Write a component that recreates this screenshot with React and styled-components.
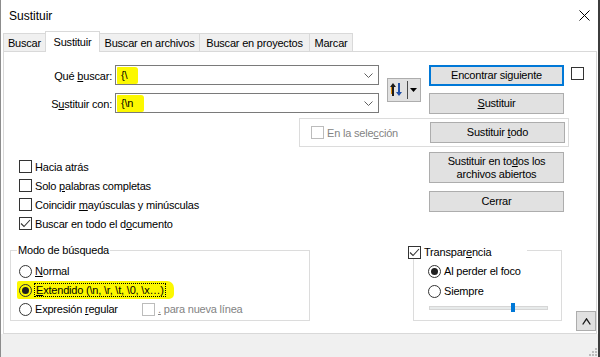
import React from "react";
import styled, { createGlobalStyle } from "styled-components";

const GlobalStyle = createGlobalStyle`
  html, body { margin: 0; padding: 0; background: #ffffff; }
  body {
    font-family: "Liberation Sans", Arial, sans-serif;
    font-size: 11px;
    letter-spacing: -0.2px;
    color: #000;
  }
  *, *::before, *::after { box-sizing: border-box; }
`;

const Window = styled.div`
  width: 600px;
  height: 357px;
  display: flex;
  flex-direction: column;
  border-left: 1px solid #8c8c8c;
  border-right: 2px solid #3c3c3c;
  background: #ffffff;
  overflow: hidden;
`;

const TitleBar = styled.div`
  flex: none;
  height: 31px;
  display: flex;
  align-items: center;
  justify-content: space-between;
  padding: 0 8px;
  font-size: 12px;
  letter-spacing: 0;
`;

const TabRow = styled.div`
  flex: none;
  height: 20px;
  display: flex;
  align-items: flex-end;
  margin-left: 2px;
  position: relative;
  z-index: 1;
`;

const Tab = styled.div`
  width: ${(p) => p.$w}px;
  height: ${(p) => (p.$active ? 21 : 18)}px;
  margin-left: ${(p) => (p.$first ? 0 : -1)}px;
  margin-bottom: ${(p) => (p.$active ? -1 : 0)}px;
  border: 1px solid #d9d9d9;
  border-bottom: none;
  background: ${(p) => (p.$active ? "#ffffff" : "#f0f0f0")};
  display: flex;
  align-items: center;
  justify-content: center;
  white-space: nowrap;
  position: relative;
  z-index: ${(p) => (p.$active ? 2 : 1)};
`;

const Panel = styled.div`
  flex: none;
  width: 594px;
  height: 283px;
  margin-left: 2px;
  border: 1px solid #d9d9d9;
  display: flex;
  flex-direction: column;
  background: #ffffff;
`;

const Footer = styled.div`
  flex: 1;
  background: #f0f0f0;
  display: flex;
  justify-content: flex-end;
  align-items: flex-end;
`;

const TopGrid = styled.div`
  margin-top: 13px;
  display: grid;
  grid-template-columns: 111px 264px 42px 143px 20px;
  grid-template-rows: 21px 21px;
  row-gap: 7px;
`;

const FieldLabel = styled.label`
  grid-column: 1;
  align-self: center;
  text-align: right;
  padding-right: 3px;
  white-space: nowrap;
`;

const Combo = styled.div`
  grid-column: 2;
  align-self: start;
  height: 20px;
  border: 1px solid #7a7a7a;
  background: #ffffff;
  display: flex;
  align-items: center;
  justify-content: space-between;
  padding: 0 5px 0 1px;
`;

const Marked = styled.span`
  display: inline-flex;
  align-items: center;
  height: 17px;
  padding: 0 11px 0 4px;
  background: #fcf800;
  border-radius: 1px 3px 2px 1px;
`;

const SwapButton = styled.div`
  grid-column: 3;
  grid-row: 1 / span 2;
  justify-self: end;
  align-self: center;
  width: 34px;
  height: 24px;
  background: #e1e1e1;
  border: 1px solid #adadad;
  display: flex;
  align-items: center;
  padding-left: 2px;
`;

const SplitLine = styled.span`
  width: 1px;
  height: 18px;
  background: #4a4a4a;
  margin: 0 2px 0 5px;
`;

const ActionButton = styled.div`
  width: 135px;
  height: ${(p) => p.$h || 21}px;
  background: #e1e1e1;
  border: ${(p) => (p.$primary ? "2px solid #0078d7" : "1px solid #adadad")};
  display: flex;
  align-items: center;
  justify-content: center;
  text-align: center;
  line-height: 13px;
  flex: none;
`;

const GridButton = styled(ActionButton)`
  grid-column: 4;
  grid-row: ${(p) => p.$row};
  justify-self: end;
  align-self: start;
`;

const GridCheck = styled.div`
  grid-column: 5;
  grid-row: 1;
  justify-self: end;
  align-self: start;
  margin-top: 2px;
`;

const SelectionFrame = styled.div`
  margin: 4px 0 0 295px;
  width: 270px;
  height: 29px;
  border: 1px solid #dcdcdc;
  display: flex;
  align-items: center;
  padding: 0 3px 0 11px;
`;

const PushRight = styled.div`
  margin-left: auto;
`;

const MiddleRow = styled.div`
  display: grid;
  grid-template-columns: 425px 135px;
`;

const CheckList = styled.div`
  padding: 10px 0 0 15px;
  display: flex;
  flex-direction: column;
`;

const ButtonStack = styled.div`
  padding-top: 5px;
  display: flex;
  flex-direction: column;
  gap: 8px;
`;

const BottomRow = styled.div`
  margin-top: auto;
  display: flex;
  align-items: flex-end;
  padding-bottom: 2px;
`;

const GroupBox = styled.fieldset`
  margin: 0 0 10px ${(p) => p.$ml}px;
  width: ${(p) => p.$w}px;
  height: 78px;
  min-width: 0;
  border: 1px solid #dcdcdc;
  padding: 3px 0 0 ${(p) => p.$pl}px;
  flex: none;
`;

const Legend = styled.legend`
  height: 15px;
  line-height: 15px;
  padding: 0 1px;
  margin-left: ${(p) => p.$ml}px;
  width: ${(p) => (p.$w ? `${p.$w}px` : "auto")};
  background: #ffffff;
  display: flex;
  align-items: flex-start;
  white-space: nowrap;
`;

const LegendItems = styled.span`
  display: flex;
  align-items: center;
  gap: 3px;
  height: 13px;
  line-height: 13px;
  margin-top: 3px;
`;

const Option = styled.div`
  display: flex;
  align-items: center;
  gap: 3px;
  height: ${(p) => p.$h || 19}px;
  white-space: nowrap;
  color: ${(p) => (p.$disabled ? "#838383" : "#000000")};
`;

const Highlight = styled.div`
  display: inline-flex;
  align-items: center;
  gap: 2px;
  height: 18px;
  margin-left: -2px;
  padding: 0 8px 0 2px;
  background: #fcf800;
  border-radius: 2px 7px 5px 2px;
  align-self: flex-start;
`;

const FocusLabel = styled.span`
  border: 1px dotted #000000;
  padding: 0 1px;
  line-height: 12px;
`;

const ExprRow = styled.div`
  display: grid;
  grid-template-columns: 123px auto;
  align-items: center;
  height: 20px;
`;

const Box = styled.span`
  width: 13px;
  height: 13px;
  flex: none;
  border: 1px solid ${(p) => (p.$disabled ? "#bcbcbc" : "#333333")};
  background: #ffffff;
  display: inline-flex;
  align-items: center;
  justify-content: center;
`;

const RadioCircle = styled.span`
  width: 13px;
  height: 13px;
  flex: none;
  border: 1px solid #333333;
  border-radius: 50%;
  background: ${(p) => (p.$clear ? "transparent" : "#ffffff")};
  display: inline-flex;
  align-items: center;
  justify-content: center;
`;

const Dot = styled.span`
  width: 7px;
  height: 7px;
  border-radius: 50%;
  background: #1f1f1f;
`;

const SliderTrack = styled.div`
  position: relative;
  width: 119px;
  height: 4px;
  margin: 5px 0 0 1px;
  background: #e7eaea;
  border: 1px solid #d6d6d6;
`;

const SliderThumb = styled.span`
  position: absolute;
  top: -4px;
  width: 4px;
  height: 9px;
  background: #0078d7;
`;

const CollapseButton = styled.div`
  width: 20px;
  height: 20px;
  margin-left: 14px;
  background: #e1e1e1;
  border: 1px solid #adadad;
  display: flex;
  align-items: center;
  justify-content: center;
  flex: none;
`;

const U = styled.u`
  text-decoration: underline;
  text-underline-offset: 1px;
`;

const Grip = styled.svg`
  margin: 0 1px 1px 0;
`;

function CheckBox({ checked, disabled }) {
  return (
    <Box $disabled={disabled}>
      {checked && (
        <svg width="11" height="11" viewBox="0 0 11 11">
          <polyline points="1,5.5 4,8.5 10,2" fill="none" stroke="#333" strokeWidth="1.1" />
        </svg>
      )}
    </Box>
  );
}

function Radio({ checked, clear }) {
  return <RadioCircle $clear={clear}>{checked && <Dot />}</RadioCircle>;
}

function Chevron() {
  return (
    <svg width="9" height="5" viewBox="0 0 9 5">
      <polyline points="0.5,0.5 4.5,4.5 8.5,0.5" fill="none" stroke="#606060" strokeWidth="1" />
    </svg>
  );
}

function SwapIcon() {
  return (
    <svg width="12" height="13" viewBox="0 0 12 13">
      <polygon points="0,4 3,0 6,4" fill="#1a1a1a" />
      <rect x="2" y="4" width="2" height="9" fill="#1a1a1a" />
      <rect x="1" y="4" width="1" height="7" fill="#e08a00" />
      <polygon points="6,9 9,13 12,9" fill="#1f4fa8" />
      <rect x="8" y="0" width="2" height="9" fill="#1f4fa8" />
    </svg>
  );
}

function DropTriangle() {
  return (
    <svg width="7" height="4" viewBox="0 0 7 4">
      <polygon points="0,0 7,0 3.5,4" fill="#000" />
    </svg>
  );
}

const tabs = [
  { label: "Buscar", w: 43 },
  { label: "Sustituir", w: 55, active: true },
  { label: "Buscar en archivos", w: 101 },
  { label: "Buscar en proyectos", w: 111 },
  { label: "Marcar", w: 44 },
];

export default function App() {
  const opacity = 0.72;
  return (
    <>
      <GlobalStyle />
      <Window>
        <TitleBar>
          <span>Sustituir</span>
          <svg width="11" height="11" viewBox="0 0 11 11">
            <line x1="0.5" y1="0.5" x2="10.5" y2="10.5" stroke="#000" strokeWidth="1" />
            <line x1="10.5" y1="0.5" x2="0.5" y2="10.5" stroke="#000" strokeWidth="1" />
          </svg>
        </TitleBar>

        <TabRow>
          {tabs.map((t, i) => (
            <Tab key={t.label} $w={t.w} $active={t.active} $first={i === 0}>
              {t.label}
            </Tab>
          ))}
        </TabRow>

        <Panel>
          <TopGrid>
            <FieldLabel style={{ gridRow: 1 }}>
              Qué <U>b</U>uscar:
            </FieldLabel>
            <Combo style={{ gridRow: 1 }}>
              <Marked>{"{\\"}</Marked>
              <Chevron />
            </Combo>
            <FieldLabel style={{ gridRow: 2 }}>
              S<U>u</U>stituir con:
            </FieldLabel>
            <Combo style={{ gridRow: 2 }}>
              <Marked>{"{\\n"}</Marked>
              <Chevron />
            </Combo>
            <SwapButton>
              <SwapIcon />
              <SplitLine />
              <DropTriangle />
            </SwapButton>
            <GridButton $row={1} $primary>
              Encontrar siguiente
            </GridButton>
            <GridButton $row={2}>
              <span>
                <U>S</U>ustituir
              </span>
            </GridButton>
            <GridCheck>
              <CheckBox />
            </GridCheck>
          </TopGrid>

          <SelectionFrame>
            <Option $disabled>
              <CheckBox disabled />
              <span>
                En la sele<U>c</U>ción
              </span>
            </Option>
            <PushRight>
              <ActionButton>
                <span>
                  Sustituir <U>t</U>odo
                </span>
              </ActionButton>
            </PushRight>
          </SelectionFrame>

          <MiddleRow>
            <CheckList>
              <Option>
                <CheckBox />
                <span>Hacia atrás</span>
              </Option>
              <Option>
                <CheckBox />
                <span>
                  Solo <U>p</U>alabras completas
                </span>
              </Option>
              <Option>
                <CheckBox />
                <span>
                  Coincidir <U>m</U>ayúsculas y minúsculas
                </span>
              </Option>
              <Option>
                <CheckBox checked />
                <span>
                  Buscar en todo el d<U>o</U>cumento
                </span>
              </Option>
            </CheckList>
            <ButtonStack>
              <ActionButton $h={31}>
                <span>
                  Sustituir en to<U>d</U>os los
                  <br />
                  archivos abiertos
                </span>
              </ActionButton>
              <ActionButton>Cerrar</ActionButton>
            </ButtonStack>
          </MiddleRow>

          <BottomRow>
            <GroupBox $ml={6} $w={300} $pl={8}>
              <Legend $ml={-2}>Modo de búsqueda</Legend>
              <Option $h={20}>
                <Radio />
                <span>
                  <U>N</U>ormal
                </span>
              </Option>
              <Highlight>
                <Radio checked clear />
                <FocusLabel>
                  <U>E</U>xtendido (\n, \r, \t, \0, \x…)
                </FocusLabel>
              </Highlight>
              <ExprRow>
                <Option $h={20}>
                  <Radio />
                  <span>
                    Expresión <U>r</U>egular
                  </span>
                </Option>
                <Option $h={20} $disabled>
                  <CheckBox disabled />
                  <span>
                    <U>.</U> para nueva línea
                  </span>
                </Option>
              </ExprRow>
            </GroupBox>

            <GroupBox $ml={103} $w={149} $pl={14}>
              <Legend $ml={-21} $w={120}>
                <LegendItems>
                  <CheckBox checked />
                  <span>
                    Transpar<U>e</U>ncia
                  </span>
                </LegendItems>
              </Legend>
              <Option $h={20}>
                <Radio checked />
                <span>Al perder el foco</span>
              </Option>
              <Option $h={20}>
                <Radio />
                <span>Siempre</span>
              </Option>
              <SliderTrack>
                <SliderThumb style={{ left: `${Math.round(opacity * 113)}px` }} />
              </SliderTrack>
            </GroupBox>

            <CollapseButton>
              <svg width="9" height="7" viewBox="0 0 9 7">
                <polyline points="0.7,6.5 4.5,0.8 8.3,6.5" fill="none" stroke="#1a1a1a" strokeWidth="1.3" />
              </svg>
            </CollapseButton>
          </BottomRow>
        </Panel>

        <Footer>
          <Grip width="10" height="10" viewBox="0 0 10 10">
            <rect x="8" y="2" width="2" height="2" fill="#bdbdbd" />
            <rect x="5" y="5" width="2" height="2" fill="#bdbdbd" />
            <rect x="8" y="5" width="2" height="2" fill="#bdbdbd" />
            <rect x="2" y="8" width="2" height="2" fill="#bdbdbd" />
            <rect x="5" y="8" width="2" height="2" fill="#bdbdbd" />
            <rect x="8" y="8" width="2" height="2" fill="#bdbdbd" />
          </Grip>
        </Footer>
      </Window>
    </>
  );
}
